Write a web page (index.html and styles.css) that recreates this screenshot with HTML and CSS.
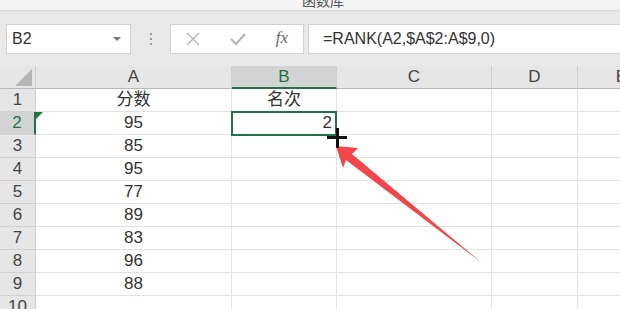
FILE: index.html
```html
<!DOCTYPE html>
<html lang="zh">
<head>
<meta charset="utf-8">
<title>函数库</title>
<link rel="stylesheet" href="styles.css">
</head>
<body>
<div class="page">
  <div class="titlebar"><span class="title">函数库</span></div>
  <div class="toolbar">
    <div class="namebox"><span class="ref">B2</span><span class="caret"></span></div>
    <div class="grip"><i></i><i></i><i></i></div>
    <div class="fbuttons">
      <svg class="ico" width="14" height="14" viewBox="0 0 14 14"><path d="M1 1L13 13M13 1L1 13" stroke="#b4b4b4" stroke-width="1.4" fill="none"/></svg>
      <svg class="ico" width="16" height="14" viewBox="0 0 16 14"><path d="M1 7L6 12L15 2" stroke="#b4b4b4" stroke-width="2" fill="none"/></svg>
      <span class="fx">fx</span>
    </div>
    <div class="formula">=RANK(A2,$A$2:A$9,0)</div>
  </div>
  <div class="sheet">
    <div class="grid">
      <div class="c corner"><span class="tri"></span></div>
      <div class="c ch">A</div>
      <div class="c ch sel">B</div>
      <div class="c ch">C</div>
      <div class="c ch">D</div>
      <div class="c ch">E</div>

      <div class="c rh">1</div><div class="c mid">分数</div><div class="c mid">名次</div><div class="c"></div><div class="c"></div><div class="c"></div>
      <div class="c rh rsel">2</div><div class="c mid a2">95</div><div class="c right">2</div><div class="c"></div><div class="c"></div><div class="c"></div>
      <div class="c rh">3</div><div class="c mid">85</div><div class="c"></div><div class="c"></div><div class="c"></div><div class="c"></div>
      <div class="c rh">4</div><div class="c mid">95</div><div class="c"></div><div class="c"></div><div class="c"></div><div class="c"></div>
      <div class="c rh">5</div><div class="c mid">77</div><div class="c"></div><div class="c"></div><div class="c"></div><div class="c"></div>
      <div class="c rh">6</div><div class="c mid">89</div><div class="c"></div><div class="c"></div><div class="c"></div><div class="c"></div>
      <div class="c rh">7</div><div class="c mid">83</div><div class="c"></div><div class="c"></div><div class="c"></div><div class="c"></div>
      <div class="c rh">8</div><div class="c mid">96</div><div class="c"></div><div class="c"></div><div class="c"></div><div class="c"></div>
      <div class="c rh">9</div><div class="c mid">88</div><div class="c"></div><div class="c"></div><div class="c"></div><div class="c"></div>
      <div class="c rh">10</div><div class="c"></div><div class="c"></div><div class="c"></div><div class="c"></div><div class="c"></div>
    </div>
    <div class="selbox"></div>
  </div>
  <svg class="overlay" width="620" height="309" viewBox="0 0 620 309">
    <polygon points="336,146 358,148 352,154 482,263 346,160 343,168" fill="#f2464a"/>
    <rect x="327" y="136" width="20" height="3" fill="#111"/>
    <rect x="336" y="128" width="3" height="20" fill="#111"/>
  </svg>
</div>
</body>
</html>
```

FILE: styles.css
```css
* { box-sizing: border-box; }
html, body { margin: 0; padding: 0; }
body {
  width: 620px;
  height: 309px;
  overflow: hidden;
  background: #ffffff;
  font-family: "Liberation Sans", "Noto Sans CJK SC", sans-serif;
  color: #333;
}
.page { position: relative; width: 620px; height: 309px; overflow: hidden; }

.titlebar {
  height: 11px;
  background: #f4f4f4;
  border-bottom: 1px solid #d6d6d6;
  overflow: hidden;
  display: flex;
  justify-content: center;
}
.title {
  font-family: "Noto Sans CJK SC", sans-serif;
  font-size: 14px;
  line-height: 14px;
  margin-top: -7px;
  margin-left: 26px;
  color: #555;
}

.toolbar {
  height: 55px;
  background: #e9e9e9;
  display: flex;
  align-items: flex-start;
  padding: 13px 0 0 6px;
}
.namebox {
  width: 125px;
  height: 30px;
  background: #fff;
  border: 1px solid #d2d2d2;
  display: flex;
  align-items: center;
  justify-content: space-between;
  padding: 0 9px 0 5px;
}
.ref { font-size: 16px; color: #333; }
.caret {
  width: 0; height: 0;
  border-left: 4px solid transparent;
  border-right: 4px solid transparent;
  border-top: 4px solid #777;
}
.grip {
  width: 39px;
  height: 30px;
  display: flex;
  flex-direction: column;
  align-items: center;
  justify-content: center;
  gap: 3px;
}
.grip i { display: block; width: 2px; height: 2px; background: #9a9a9a; }
.fbuttons {
  width: 134px;
  height: 30px;
  background: #fff;
  border: 1px solid #d2d2d2;
  display: flex;
  align-items: center;
  justify-content: space-between;
  padding: 0 15px 0 15px;
}
.fx {
  font-family: "Liberation Serif", serif;
  font-style: italic;
  font-size: 17px;
  color: #666;
  margin-top: -2px;
}
.formula {
  margin-left: 4px;
  flex: 1;
  height: 30px;
  background: #fff;
  border: 1px solid #d2d2d2;
  border-right: none;
  font-size: 16px;
  line-height: 28px;
  padding-left: 14px;
  color: #333;
}

.sheet { position: relative; }
.grid {
  display: grid;
  width: 666px;
  grid-template-columns: 36px 196px 105px 155px 86px 88px;
  grid-template-rows: 23px repeat(10, 23px);
}
.c {
  border-right: 1px solid #e2e2e2;
  border-bottom: 1px solid #e2e2e2;
  font-size: 17px;
  line-height: 22px;
  color: #333;
  white-space: nowrap;
  overflow: hidden;
}
.ch {
  background: #e6e6e6;
  text-align: center;
  border-right: 1px solid #cfcfcf;
  border-bottom: 1px solid #b8b8b8;
  color: #444;
}
.ch.sel {
  background: #d3d3d3;
  color: #217346;
  border-bottom: 2px solid #217346;
}
.corner {
  background: #e6e6e6;
  border-right: 1px solid #cfcfcf;
  border-bottom: 1px solid #b8b8b8;
  position: relative;
}
.tri {
  position: absolute;
  right: 3px;
  bottom: 2px;
  width: 0; height: 0;
  border-left: 17px solid transparent;
  border-bottom: 17px solid #b5b5b5;
}
.rh {
  background: #e6e6e6;
  text-align: center;
  border-right: 1px solid #cfcfcf;
  border-bottom: 1px solid #d0d0d0;
  color: #444;
}
.rh.rsel {
  background: #d3d3d3;
  color: #217346;
  border-right: 2px solid #217346;
}
.mid { text-align: center; }
.right { text-align: right; padding-right: 4px; }
.a2 { position: relative; }
.a2::before {
  content: "";
  position: absolute;
  left: 0; top: 0;
  width: 0; height: 0;
  border-top: 7px solid #1e7a3a;
  border-right: 7px solid transparent;
}
.selbox {
  position: absolute;
  left: 231px;
  top: 45px;
  width: 106px;
  height: 25px;
  border: 2px solid #217346;
}
.overlay { position: absolute; left: 0; top: 0; }
```
